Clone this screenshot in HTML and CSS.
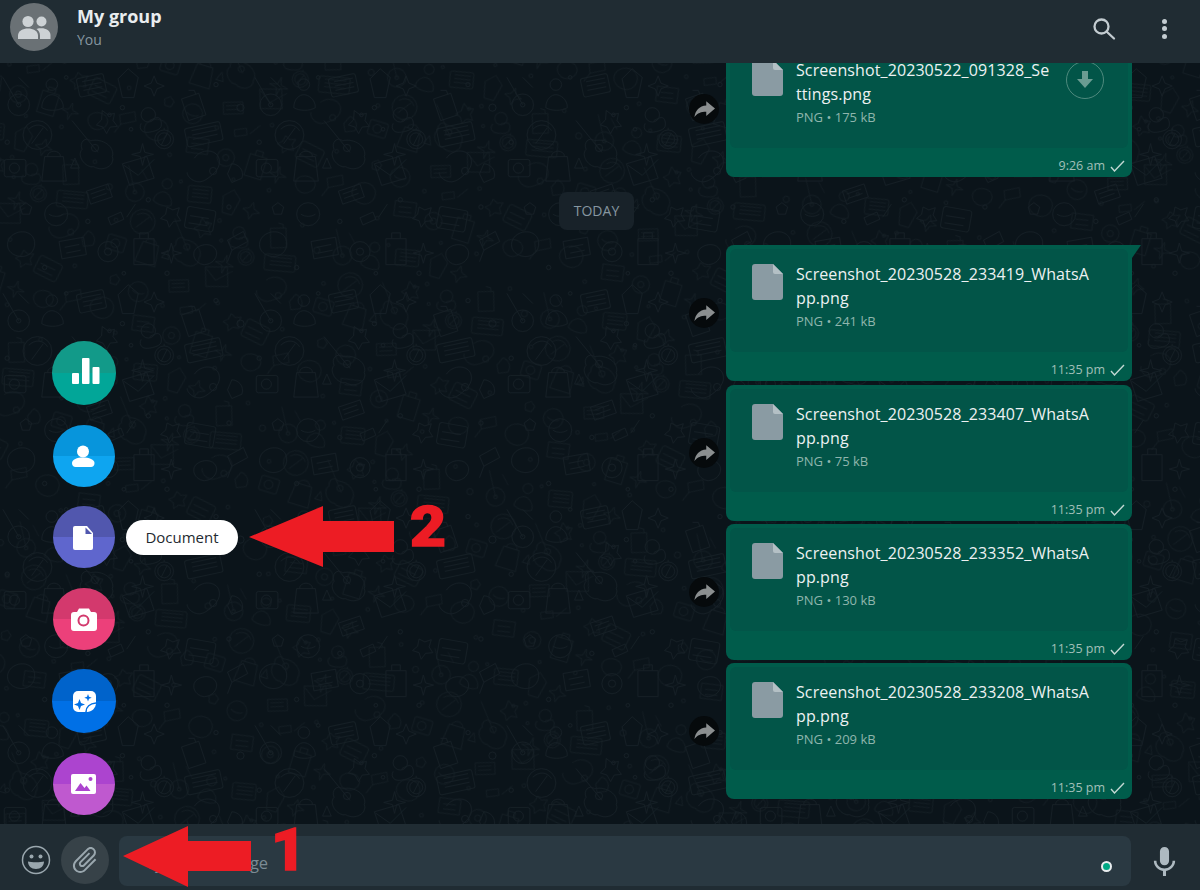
FILE: index.html
```html
<!DOCTYPE html>
<html lang="en">
<head>
    <meta charset="UTF-8">
    <meta name="viewport" content="width=device-width, initial-scale=1.0">
    <title>My group</title>
    <link rel="stylesheet" href="styles.css">
</head>
<body>
    <svg class="icon-defs" width="0" height="0">
        <symbol id="icon-forward" viewBox="0 0 24 20"><path fill="#8b8f90" d="M14 1l10 8.500-10 8.500v-5c-6 0-10 1.500-13.500 6C1.500 12 6 6.500 14 6z"/></symbol>
        <symbol id="icon-doc" viewBox="0 0 31 36"><path fill="#8a9ba3" d="M3 0h18l10 10v23a3 3 0 0 1-3 3H3a3 3 0 0 1-3-3V3a3 3 0 0 1 3-3z"/><path fill="#b4c0c5" d="M21 0l10 10h-8a2 2 0 0 1-2-2z"/></symbol>
        <symbol id="icon-check" viewBox="0 0 15 12"><path fill="none" stroke="#c2d8d3" stroke-width="1.400" d="M1 7l3.500 4L14 1"/></symbol>
    </svg>
    <div class="app">
        <header class="topbar">
            <div class="avatar">
                <svg width="34" height="24" viewBox="0 0 34 24" fill="#cdd2d5">
                    <circle cx="11" cy="6.5" r="5.6"/>
                    <circle cx="24.5" cy="6.5" r="5"/>
                    <path d="M1 24v-3.500c0-4.500 5-7 10-7s10 2.500 10 7V24z"/>
                    <path d="M23 24v-3.500c0-3-1.300-5-3.500-6.600 1.600-.5 3.300-.6 5-.6 4.500 0 9 2.400 9 6.800V24z"/>
                </svg>
            </div>
            <div class="group-info">
                <div class="group-name">My group</div>
                <div class="group-sub">You</div>
            </div>
            <svg class="search-icon" width="24" height="24" viewBox="0 0 24 24" fill="none" stroke="#c3ccd1" stroke-width="2.300">
                <circle cx="9.500" cy="9.500" r="7"/>
                <path d="M14.500 14.500l7.500 7" stroke-linecap="round"/>
            </svg>
            <div class="kebab"><span></span><span></span><span></span></div>
        </header>

        <main class="chat">
            <svg class="doodles" width="100%" height="100%">
                <defs>
                    <pattern id="doodle" width="350" height="300" patternUnits="userSpaceOnUse" patternTransform="scale(0.72)">
                        <g fill="none" stroke="#151f25" stroke-width="1.300">
                            <rect x="108" y="18" width="38" height="26" rx="3" transform="rotate(-12 127 31)"/>
                            <path d="M114 26l26-5M115 32l26-5M116 38l26-5"/>
                            <circle cx="26" cy="58" r="15"/>
                            <circle cx="26" cy="58" r="3"/>
                            <path d="M4 20l22 38M26 20l14 14"/>
                            <circle cx="72" cy="30" r="8"/>
                            <path d="M58 62c0-12 8-18 14-18s16 6 16 18c-8 5-22 5-30 0z"/>
                            <path d="M178 8l14 12-6 28h-16l-6-26z"/>
                            <path d="M214 18l4 10 10 4-10 4-4 10-4-10-10-4 10-4z"/>
                            <path d="M262 76l8 6 9-2-2 10 6 8-10 1-5 9-5-9-9-3 7-7z" transform="translate(-120 -10)"/>
                            <circle cx="206" cy="72" r="10"/>
                            <path d="M196 84c-4 8 2 14 12 12s18-4 16-14-8-6-16-2"/>
                            <rect x="258" y="86" width="50" height="26" rx="3" transform="rotate(-12 283 99)"/>
                            <path d="M266 94l34-7M267 100l34-7M268 106l34-7"/>
                            <path d="M252 50l24-8 10 30-24 8zM262 38h8l2 6"/>
                            <circle cx="52" cy="100" r="20"/>
                            <path d="M40 92c8-8 20-8 26 2M44 112l16-22"/>
                            <path d="M100 80l36 44"/>
                            <path d="M126 108c-8-6-16 2-12 12-8 8 4 26 16 24 14 8 30-2 26-14 4-14-14-26-30-22z"/>
                            <circle cx="132" cy="118" r="5"/>
                            <circle cx="228" cy="106" r="13"/>
                            <circle cx="228" cy="106" r="9"/>
                            <path d="M224 114l4-8 4-8M228 90v3"/>
                            <path d="M198 112l3 12 12 3-12 3-3 12-3-12-12-3 12-3z"/>
                            <circle cx="92" cy="20" r="2.500"/>
                            <circle cx="170" cy="62" r="3"/>
                            <circle cx="182" cy="92" r="2.500"/>
                            <circle cx="152" cy="72" r="2.500"/>
                            <circle cx="300" cy="30" r="3"/>
                            <circle cx="334" cy="62" r="5"/>
                            <circle cx="10" cy="110" r="3"/>
                            <path d="M62 130h26l4 34H58z"/>
                            <path d="M66 130c0-10 18-10 18 0"/>
                            <rect x="6" y="134" width="30" height="24" rx="3"/>
                            <circle cx="20" cy="146" r="7"/>
                            <path d="M104 132l6 14h-12z"/>
                            <path d="M36 194l8 6-3 10-10 0-3-10z"/>
                            <path d="M120 178l30-10 6 18-30 10zM126 182l20-7M128 188l20-7"/>
                            <path d="M170 140l34-10 10 30-34 10z"/>
                            <path d="M172 142l20 14 22-22"/>
                            <path d="M270 132c10-14 30-12 34 0s-6 22-18 30-26-2-26-10"/>
                            <circle cx="296" cy="150" r="5"/>
                            <path d="M322 140c8 0 18 8 14 20l-14 6-6-12z"/>
                            <path d="M150 215l18-8 4 10-18 8zM176 214l12-18"/>
                            <path d="M232 200l8 4 9-3-3 10 5 8-10 1-6 8-3-9-9-3 7-6z"/>
                            <circle cx="78" cy="210" r="16"/>
                            <path d="M68 210c6 4 14 4 20 0"/>
                            <rect x="258" y="202" width="40" height="30" rx="4" transform="rotate(10 278 217)"/>
                            <path d="M264 212l26 4M262 222l26 4"/>
                            <circle cx="122" cy="220" r="3"/>
                            <circle cx="206" cy="190" r="3"/>
                            <circle cx="318" cy="200" r="3"/>
                            <path d="M16 240c12-10 30-6 32 8s-10 24-24 20-18-18-8-28z"/>
                            <path d="M82 248l34-6 4 24-34 6zM90 256l20-4M92 264l20-4"/>
                            <circle cx="150" cy="262" r="14"/>
                            <circle cx="150" cy="262" r="5"/>
                            <path d="M186 244h28v36h-28zM194 244v-8h12v8"/>
                            <path d="M238 250l3 11 11 3-11 3-3 11-3-11-11-3 11-3z"/>
                            <path d="M272 258c8-8 24-8 28 2s-6 20-16 20-20-12-12-22z"/>
                            <path d="M316 246l22-12 6 14-22 12zM322 260l-6 16"/>
                            <circle cx="62" cy="284" r="3"/>
                            <circle cx="232" cy="292" r="3"/>
                            <circle cx="172" cy="292" r="2.500"/>
                        </g>
                    </pattern>
                    <pattern id="doodle-alt" href="#doodle" patternTransform="translate(130 90) rotate(17) scale(0.62)"/>
                </defs>
                <rect width="100%" height="100%" fill="url(#doodle)"/>
                <rect width="100%" height="100%" fill="url(#doodle-alt)"/>
            </svg>

            <div class="messages">
                <div class="msg-row">
                    <div class="forward"><svg width="21" height="18"><use href="#icon-forward"/></svg></div>
                    <div class="bubble">
                        <div class="file">
                            <svg class="doc-icon" width="31" height="36"><use href="#icon-doc"/></svg>
                            <div class="file-text file-text-short">
                                <div class="file-name">Screenshot_20230522_091328_Settings.png</div>
                                <div class="file-meta">PNG • 175 kB</div>
                            </div>
                            <div class="download">
                                <svg width="16" height="18" viewBox="0 0 16 18" fill="#6b9c92"><path d="M5 0h6v8h5l-8 9-8-9h5z"/></svg>
                            </div>
                        </div>
                        <div class="time">9:26 am <svg width="15" height="12"><use href="#icon-check"/></svg></div>
                    </div>
                </div>

                <div class="day-chip">TODAY</div>

                <div class="msg-row msg-row-first">
                    <div class="forward"><svg width="21" height="18"><use href="#icon-forward"/></svg></div>
                    <div class="bubble bubble-tail">
                        <div class="file">
                            <svg class="doc-icon" width="31" height="36"><use href="#icon-doc"/></svg>
                            <div class="file-text">
                                <div class="file-name">Screenshot_20230528_233419_WhatsApp.png</div>
                                <div class="file-meta">PNG • 241 kB</div>
                            </div>
                        </div>
                        <div class="time">11:35 pm <svg width="15" height="12"><use href="#icon-check"/></svg></div>
                    </div>
                </div>

                <div class="msg-row">
                    <div class="forward"><svg width="21" height="18"><use href="#icon-forward"/></svg></div>
                    <div class="bubble">
                        <div class="file">
                            <svg class="doc-icon" width="31" height="36"><use href="#icon-doc"/></svg>
                            <div class="file-text">
                                <div class="file-name">Screenshot_20230528_233407_WhatsApp.png</div>
                                <div class="file-meta">PNG • 75 kB</div>
                            </div>
                        </div>
                        <div class="time">11:35 pm <svg width="15" height="12"><use href="#icon-check"/></svg></div>
                    </div>
                </div>

                <div class="msg-row">
                    <div class="forward"><svg width="21" height="18"><use href="#icon-forward"/></svg></div>
                    <div class="bubble">
                        <div class="file">
                            <svg class="doc-icon" width="31" height="36"><use href="#icon-doc"/></svg>
                            <div class="file-text">
                                <div class="file-name">Screenshot_20230528_233352_WhatsApp.png</div>
                                <div class="file-meta">PNG • 130 kB</div>
                            </div>
                        </div>
                        <div class="time">11:35 pm <svg width="15" height="12"><use href="#icon-check"/></svg></div>
                    </div>
                </div>

                <div class="msg-row">
                    <div class="forward"><svg width="21" height="18"><use href="#icon-forward"/></svg></div>
                    <div class="bubble">
                        <div class="file">
                            <svg class="doc-icon" width="31" height="36"><use href="#icon-doc"/></svg>
                            <div class="file-text">
                                <div class="file-name">Screenshot_20230528_233208_WhatsApp.png</div>
                                <div class="file-meta">PNG • 209 kB</div>
                            </div>
                        </div>
                        <div class="time">11:35 pm <svg width="15" height="12"><use href="#icon-check"/></svg></div>
                    </div>
                </div>
            </div>

            <!-- attach menu -->
            <div class="attach-menu">
                <div class="attach-btn big poll">
                    <svg width="64" height="64" viewBox="0 0 64 64" fill="#fff">
                        <rect x="20" y="32" width="7" height="11" rx="1"/>
                        <rect x="30" y="17" width="7.500" height="26" rx="1"/>
                        <rect x="40.500" y="26" width="7" height="17" rx="1"/>
                    </svg>
                </div>
                <div class="attach-btn contact">
                    <svg width="62" height="62" viewBox="0 0 62 62" fill="#fff">
                        <circle cx="30" cy="26.500" r="6"/>
                        <path d="M19 38c0-3.500 5-5.500 11-5.500s11.500 2 11.500 5.500c0 2.500-1.500 4-3.500 4H22.500c-2 0-3.500-1.500-3.500-4z"/>
                    </svg>
                </div>
                <div class="attach-btn document">
                    <svg width="62" height="62" viewBox="0 0 62 62">
                        <path fill="#fff" d="M22 20h12l6 7v15a2 2 0 0 1-2 2H22a2 2 0 0 1-2-2V22a2 2 0 0 1 2-2z"/>
                        <path fill="#5157ae" d="M32.500 21.500l6.500 6.500h-6.500z"/>
                    </svg>
                    <div class="tooltip">Document</div>
                </div>
                <div class="attach-btn camera">
                    <svg width="62" height="62" viewBox="0 0 62 62">
                        <path fill="#fff" d="M21 24h3l2-3.500h10l2 3.500h3a3 3 0 0 1 3 3v13a3 3 0 0 1-3 3H21a3 3 0 0 1-3-3V27a3 3 0 0 1 3-3z"/>
                        <circle cx="30.500" cy="32.500" r="5" fill="none" stroke="#d3396d" stroke-width="2"/>
                    </svg>
                </div>
                <div class="attach-btn big sticker">
                    <svg width="64" height="64" viewBox="0 0 64 64">
                        <path fill="#fff" d="M26 22h13a5 5 0 0 1 5 5v7c0 5-4.500 9-9 9h-9a5 5 0 0 1-5-5V27a5 5 0 0 1 5-5z"/>
                        <path fill="#0070e6" d="M27.500 30l1.500 4 4 1.500-4 1.500-1.500 4-1.500-4-4-1.500 4-1.500zM36 25l1 2.700 2.700 1-2.700 1-1 2.700-1-2.700-2.700-1 2.700-1z"/>
                        <path fill="none" stroke="#0070e6" stroke-width="1.600" d="M34 43c0-5 4-8.500 10-9"/>
                    </svg>
                </div>
                <div class="attach-btn gallery">
                    <svg width="62" height="62" viewBox="0 0 62 62">
                        <rect x="18" y="21" width="25" height="20" rx="2" fill="#fff"/>
                        <path fill="#ac44cf" d="M22 38l5.500-8 4 5 2-2.500 4 5.500z"/>
                        <circle cx="37.500" cy="26" r="2" fill="#ac44cf"/>
                    </svg>
                </div>
            </div>
        </main>

        <footer class="composer">
            <svg class="emoji-icon" width="30" height="30" viewBox="0 0 30 30">
                <circle cx="15" cy="15" r="13.500" fill="none" stroke="#9aa7ae" stroke-width="1.500"/>
                <circle cx="10.500" cy="11.500" r="2" fill="#9aa7ae"/>
                <circle cx="19.500" cy="11.500" r="2" fill="#9aa7ae"/>
                <path fill="#9aa7ae" d="M7 16.500c3 1 13 1 16 0 0 4.500-3.200 7.500-8 7.500s-8-3-8-7.500z"/>
            </svg>
            <div class="clip-btn">
                <svg width="32" height="32" viewBox="0 0 24 24" fill="#9aa7ae">
                    <path transform="rotate(45 12 12)" d="M16.500 6v11.500c0 2.210-1.790 4-4 4s-4-1.790-4-4V5c0-1.380 1.120-2.500 2.500-2.500s2.500 1.120 2.500 2.500v10.500c0 .55-.45 1-1 1s-1-.45-1-1V6H10v9.500c0 1.380 1.120 2.500 2.500 2.500s2.500-1.120 2.500-2.500V5c0-2.210-1.790-4-4-4S7 2.790 7 5v12.500c0 3.040 2.460 5.500 5.500 5.500s5.500-2.460 5.500-5.500V6h-1.500z"/>
                </svg>
            </div>
            <div class="input-box">
                <span class="placeholder">Type a message</span>
                <span class="status-dot"></span>
            </div>
            <svg class="mic-icon" width="31" height="31" viewBox="0 0 24 24" fill="#aebac1">
                <path d="M11.999 14.942c2.001 0 3.531-1.530 3.531-3.531V4.350c0-2.001-1.530-3.531-3.531-3.531S8.469 2.350 8.469 4.350v7.061c0 2.001 1.530 3.531 3.530 3.531zm6.238-3.530c0 3.531-2.942 6.002-6.237 6.002s-6.237-2.471-6.237-6.002H3.761c0 4.001 3.178 7.297 7.061 7.885v3.884h2.354v-3.884c3.884-.588 7.061-3.884 7.061-7.885h-2z"/>
            </svg>
        </footer>

        <!-- red arrows drawn on top of the screenshot -->
        <svg class="arrows" width="1200" height="890" viewBox="0 0 1200 890" fill="#ed1c24">
            <polygon points="249,537 323,506 323,521 394,521 394,552 323,552 323,567"/>
            <polygon points="123,856 188,826 188,841 251,841 251,871 188,871 188,887"/>
        </svg>
        <span class="step step-one">1</span>
        <span class="step step-two">2</span>
    </div>
</body>
</html>
```

FILE: styles.css
```css
* {
    box-sizing: border-box;
}
body {
    margin: 0;
    font-family: "Open Sans", "Noto Sans", sans-serif;
    background-color: #0b141a;
}
.icon-defs {
    display: block;
    height: 0;
}
.app {
    position: relative;
    display: flex;
    flex-direction: column;
    width: 1200px;
    height: 890px;
    overflow: hidden;
}

/* top bar */
.topbar {
    display: flex;
    align-items: flex-start;
    flex-shrink: 0;
    height: 63px;
    padding: 3px 0 0 10px;
    background-color: #202c33;
    z-index: 2;
}
.avatar {
    display: flex;
    align-items: center;
    justify-content: center;
    width: 48px;
    height: 48px;
    border-radius: 50%;
    background-color: #6a7175;
}
.group-info {
    flex: 1;
    margin-left: 19px;
}
.group-name {
    font-size: 18px;
    font-weight: 700;
    line-height: 26px;
    color: #e9edef;
}
.group-sub {
    margin-top: 1px;
    font-size: 14px;
    line-height: 20px;
    color: #8696a0;
}
.search-icon {
    margin: 14px 46px 0 0;
}
.kebab {
    display: flex;
    flex-direction: column;
    gap: 2.500px;
    margin: 15.500px 33px 0 0;
}
.kebab span {
    width: 5px;
    height: 5px;
    border-radius: 50%;
    background-color: #c3ccd1;
}

/* chat area */
.chat {
    position: relative;
    flex: 1;
    min-height: 0;
    overflow: hidden;
    background-color: #0b141a;
}
.doodles {
    position: absolute;
    top: 0;
    left: 0;
}
.messages {
    position: relative;
    display: flex;
    flex-direction: column;
    justify-content: flex-end;
    align-items: flex-end;
    gap: 3px;
    height: 100%;
    padding: 0 68px 25px 0;
}
.msg-row {
    display: flex;
    align-items: center;
    flex-shrink: 0;
    gap: 7px;
}
.msg-row-first {
    margin-bottom: 1px;
}
.forward {
    display: flex;
    align-items: center;
    justify-content: center;
    width: 30px;
    height: 30px;
    border-radius: 50%;
    background-color: #060a0c;
}
.day-chip {
    flex-shrink: 0;
    width: 75px;
    height: 38px;
    margin: 12px 498px;
    border-radius: 8px;
    background-color: #182229;
    font-size: 14px;
    line-height: 38px;
    text-align: center;
    color: #8696a0;
}
.bubble {
    position: relative;
    width: 406px;
    height: 136px;
    padding: 4px 4px 0;
    border-radius: 8px;
    background-color: #005c4b;
}
.bubble-tail {
    border-top-right-radius: 0;
}
.bubble-tail::after {
    content: "";
    position: absolute;
    top: 0;
    left: 100%;
    border-top: 13px solid #005c4b;
    border-right: 9px solid transparent;
}
.file {
    display: flex;
    align-items: flex-start;
    height: 103px;
    padding: 15px 0 0 22px;
    border-radius: 6px;
    background-color: #025548;
}
.doc-icon {
    flex-shrink: 0;
}
.file-text {
    width: 298px;
    margin: -2px 0 0 13px;
}
.file-text-short {
    width: 256px;
}
.file-name {
    font-size: 16px;
    letter-spacing: 0.1px;
    line-height: 24px;
    word-break: break-all;
    color: #edf1f2;
}
.file-meta {
    margin-top: 3px;
    font-size: 13px;
    line-height: 17px;
    color: #8fb5ad;
}
.download {
    display: flex;
    align-items: center;
    justify-content: center;
    flex-shrink: 0;
    width: 38px;
    height: 38px;
    margin: 1px 0 0 14px;
    border: 1px solid #4f8a7e;
    border-radius: 50%;
}
.time {
    display: flex;
    align-items: center;
    justify-content: flex-end;
    gap: 5px;
    height: 29px;
    padding: 6px 3px 0 0;
    font-size: 12.500px;
    color: #a0c0b9;
}

/* attach menu, sits over the chat */
.attach-menu {
    position: absolute;
    left: 52px;
    bottom: 9px;
    display: flex;
    flex-direction: column;
    align-items: center;
    gap: 19.600px;
    width: 64px;
}
.attach-btn {
    position: relative;
    width: 62px;
    height: 62px;
    border-radius: 50%;
}
.attach-btn.big {
    width: 64px;
    height: 64px;
}
.attach-btn svg {
    display: block;
}
.poll {
    background: linear-gradient(#129a89 50%, #02a698 50%);
}
.contact {
    background: linear-gradient(#0795dc 50%, #0ea5f0 50%);
}
.document {
    background: linear-gradient(#5157ae 50%, #5f66cd 50%);
}
.camera {
    background: linear-gradient(#d3396d 50%, #ec407a 50%);
}
.sticker {
    background: linear-gradient(#0063cb 50%, #0070e6 50%);
}
.gallery {
    background: linear-gradient(#ac44cf 50%, #bf59cf 50%);
}
.tooltip {
    position: absolute;
    top: 14px;
    left: 73px;
    width: 112px;
    height: 35px;
    border-radius: 18px;
    background-color: #fff;
    font-size: 15px;
    line-height: 35px;
    text-align: center;
    color: #1f2a30;
}

/* message box */
.composer {
    display: flex;
    align-items: flex-start;
    flex-shrink: 0;
    height: 66px;
    padding: 12px 0 4px 20px;
    background-color: #202c33;
    z-index: 2;
}
.emoji-icon {
    flex-shrink: 0;
    margin: 9px 0 0 1px;
}
.clip-btn {
    display: flex;
    align-items: center;
    justify-content: center;
    flex-shrink: 0;
    width: 48px;
    height: 48px;
    margin-left: 10px;
    border-radius: 50%;
    background-color: #374248;
}
.input-box {
    position: relative;
    display: flex;
    align-items: center;
    justify-content: space-between;
    width: 1012px;
    height: 50px;
    margin-left: 10px;
    padding: 2px 19px 0 27px;
    border-radius: 8px;
    background-color: #2a3942;
}
.placeholder {
    font-size: 16.500px;
    color: #7b8b94;
}
.status-dot {
    width: 11px;
    height: 11px;
    margin-top: 9px;
    border: 2px solid #e9edef;
    border-radius: 50%;
    background-color: #00a884;
}
.mic-icon {
    flex-shrink: 0;
    margin: 10px 0 0 18px;
}

/* annotations */
.arrows {
    position: absolute;
    top: 0;
    left: 0;
    z-index: 3;
}
.step {
    position: absolute;
    z-index: 3;
    font-family: Roboto, "Liberation Sans", sans-serif;
    font-weight: 900;
    color: #ed1c24;
    -webkit-text-stroke: 1.500px #ed1c24;
    line-height: 1;
}
.step-one {
    top: 820px;
    left: 271px;
    font-size: 60px;
}
.step-two {
    top: 500px;
    left: 410px;
    font-size: 55px;
    transform: scaleX(1.13);
    transform-origin: left center;
}
```
